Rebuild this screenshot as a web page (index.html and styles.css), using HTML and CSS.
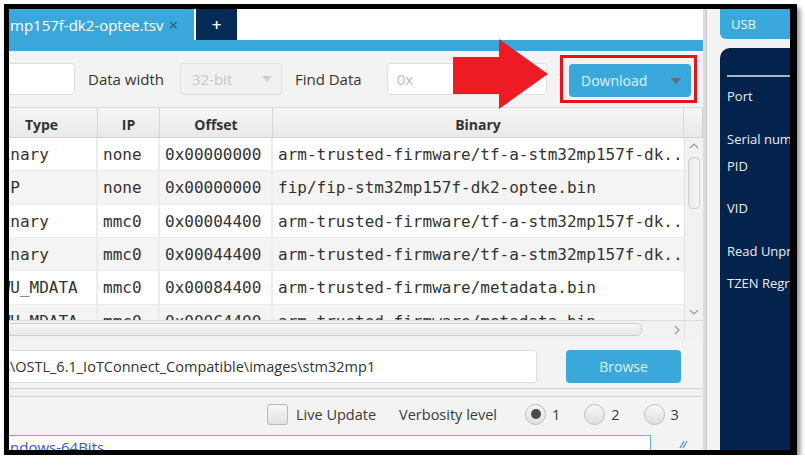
FILE: index.html
```html
<!DOCTYPE html>
<html>
<head>
<meta charset="utf-8">
<link rel="stylesheet" href="styles.css">
</head>
<body>
<div class="frame">
  <div class="main">
    <div class="tabbar">
      <div class="tab active"><span class="tab-title">mp157f-dk2-optee.tsv</span><span class="tab-close">×</span></div>
      <div class="tab add">+</div>
    </div>
    <div class="strip"></div>
    <div class="toolbar">
      <div class="field addr"></div>
      <span class="label lbl-width">Data width</span>
      <div class="combo"><span>32-bit</span><svg class="caret" width="10" height="6" viewBox="0 0 10 6"><path d="M0 0h10L5 6z" fill="#cfcfcf"/></svg></div>
      <span class="label lbl-find">Find Data</span>
      <div class="field find"><span class="ph">0x</span></div>
      <div class="highlight">
        <div class="btn download"><span>Download</span><svg class="caret" width="10" height="6" viewBox="0 0 10 6"><path d="M0 0h10L5 6z" fill="#6a6a6a"/></svg></div>
      </div>
    </div>
    <svg class="arrow" width="96" height="70" viewBox="0 0 96 70"><path d="M0 18H46V0L95 35L46 70V55H0Z" fill="#ED1C24"/></svg>

    <div class="table">
      <div class="thead">
        <div class="th">Type</div>
        <div class="th">IP</div>
        <div class="th">Offset</div>
        <div class="th">Binary</div>
        <div class="th last"></div>
      </div>
      <div class="tbody">
        <div class="rows">
          <div class="tr"><div class="td">Binary</div><div class="td">none</div><div class="td">0x00000000</div><div class="td">arm-trusted-firmware/tf-a-stm32mp157f-dk..</div></div>
          <div class="tr alt"><div class="td">FIP</div><div class="td">none</div><div class="td">0x00000000</div><div class="td">fip/fip-stm32mp157f-dk2-optee.bin</div></div>
          <div class="tr"><div class="td">Binary</div><div class="td">mmc0</div><div class="td">0x00004400</div><div class="td">arm-trusted-firmware/tf-a-stm32mp157f-dk..</div></div>
          <div class="tr alt"><div class="td">Binary</div><div class="td">mmc0</div><div class="td">0x00044400</div><div class="td">arm-trusted-firmware/tf-a-stm32mp157f-dk..</div></div>
          <div class="tr"><div class="td">FWU_MDATA</div><div class="td">mmc0</div><div class="td">0x00084400</div><div class="td">arm-trusted-firmware/metadata.bin</div></div>
          <div class="tr alt"><div class="td">FWU_MDATA</div><div class="td">mmc0</div><div class="td">0x000C4400</div><div class="td">arm-trusted-firmware/metadata.bin</div></div>
        </div>
      </div>
      <div class="vscroll">
        <svg class="chev up" width="10" height="6" viewBox="0 0 10 6"><path d="M1 5L5 1L9 5" fill="none" stroke="#9a9a9a" stroke-width="1.2"/></svg>
        <div class="vthumb"></div>
        <svg class="chev down" width="10" height="6" viewBox="0 0 10 6"><path d="M1 1L5 5L9 1" fill="none" stroke="#9a9a9a" stroke-width="1.2"/></svg>
      </div>
      <div class="hscroll">
        <div class="hthumb"></div>
        <svg class="chev right" width="6" height="10" viewBox="0 0 6 10"><path d="M1 1L5 5L1 9" fill="none" stroke="#9a9a9a" stroke-width="1.2"/></svg>
      </div>
      <div class="corner"></div>
    </div>

    <div class="pathrow">
      <div class="field path">s\OSTL_6.1_IoTConnect_Compatible\images\stm32mp1</div>
      <div class="btn browse">Browse</div>
    </div>
    <div class="splitter"></div>
    <div class="options">
      <div class="checkbox"></div>
      <span class="opt-label live">Live Update</span>
      <span class="opt-label verb">Verbosity level</span>
      <div class="radio on"></div><span class="opt-label num">1</span>
      <div class="radio"></div><span class="opt-label num">2</span>
      <div class="radio"></div><span class="opt-label num">3</span>
    </div>
    <div class="logrow">
      <div class="log"><span class="logtext">ndows-64Bits</span></div>
      <svg class="grip" width="10" height="10" viewBox="0 0 10 10"><path d="M2 9L6 2M5 9L9 2" fill="none" stroke="#3a8fd0" stroke-width="1.2"/></svg>
    </div>
  </div>
  <div class="divider"></div>
  <div class="side">
    <div class="usb">USB</div>
    <div class="panel">
      <div class="panel-line"></div>
      <div class="pl port">Port</div>
      <div class="pl serial">Serial number</div>
      <div class="pl pid">PID</div>
      <div class="pl vid">VID</div>
      <div class="pl read">Read Unprotect</div>
      <div class="pl tzen">TZEN Regression</div>
    </div>
  </div>
</div>
</body>
</html>
```

FILE: styles.css
```css
* { box-sizing: border-box; }
html, body { margin: 0; padding: 0; background: #ffffff; }
body { font-family: "Open Sans", "Noto Sans", sans-serif; color: #333; }

.frame {
  margin: 4px 0 0 4px;
  width: 793px;
  height: 451px;
  border-style: solid;
  border-color: #000;
  border-width: 5px 7px 5px 5px;
  box-shadow: 3px 4px 5px rgba(0,0,0,0.45);
  display: flex;
  overflow: hidden;
  background: #f3f3f3;
}

.main {
  width: 694px;
  flex: none;
  display: flex;
  flex-direction: column;
  background: #f3f3f3;
  position: relative;
  overflow: hidden;
}

/* tabs */
.tabbar { height: 31px; background: #fff; display: flex; flex: none; }
.tab { height: 31px; display: flex; align-items: center; }
.tab.active { width: 185px; background: #3AA8DB; color: #fff; font-size: 15px; padding-left: 1px; }
.tab-close { margin-left: 5px; color: #2b5a7c; font-size: 17px; }
.tab.add { margin-left: 2px; width: 41px; background: #052A55; color: #fff; justify-content: center; font-size: 17px; font-weight: 600; }
.strip { height: 11px; background: #3AA8DB; flex: none; }

/* toolbar */
.toolbar { height: 56px; flex: none; display: flex; align-items: center; }
.field { height: 32px; background: #fff; border: 1px solid #dedede; border-radius: 3px; }
.field.addr { width: 76px; margin-left: -10px; }
.label { font-size: 15px; color: #333; }
.lbl-width { margin-left: 13px; }
.combo {
  margin-left: 16px; width: 102px; height: 32px;
  background: #f1f1f1; border: 1px solid #e3e3e3; border-radius: 3px;
  color: #c6c6c6; font-size: 15px;
  display: flex; align-items: center; justify-content: space-between;
  padding: 0 9px 0 11px;
}
.lbl-find { margin-left: 13px; }
.field.find { margin-left: 25px; width: 160px; display: flex; align-items: center; padding-left: 9px; }
.ph { color: #bcbcbc; font-size: 15px; }
.highlight {
  margin-left: auto; margin-right: 6px;
  border: 3px solid #E8141C;
  padding: 6px 3px 3px 6px;
}
.btn {
  background: #3AA8DB; color: #dff1fa; border-radius: 4px;
  font-size: 14px; height: 33px;
  display: flex; align-items: center;
}
.btn.download { width: 122px; justify-content: space-between; padding: 0 10px 0 12px; }

.arrow { position: absolute; left: 444px; top: 30px; }

/* table */
.table {
  height: 231px; flex: none;
  border-top: 1px solid #d8d8d8;
  display: grid;
  grid-template-columns: 675px 19px;
  grid-template-rows: 30px 182px 18px;
  background: #fff;
}
.thead {
  grid-column: 1 / 3; grid-row: 1;
  display: grid;
  grid-template-columns: 112px 62px 113px 411px 19px;
  margin-left: -23px;
  background: linear-gradient(#f6f6f6, #e9e9e9);
  border-bottom: 1px solid #d2d2d2;
}
.th {
  display: flex; align-items: center; justify-content: center;
  font-weight: 700; font-size: 14px; color: #333;
  padding-top: 4px;
  border-right: 1px solid #d6d6d6;
}
.th.last { border-right: 1px solid #cfcfcf; }
.tbody { grid-column: 1; grid-row: 2; overflow: hidden; background: #fff; }
.rows { margin-left: -23px; }
.tr {
  display: grid;
  grid-template-columns: 112px 62px 113px 411px;
  height: 33.33px;
  background: #fff;
}
.tr.alt { background: #f4f4f4; }
.td {
  font-family: "DejaVu Sans Mono", monospace;
  font-size: 16px; color: #333;
  padding-left: 5px; padding-top: 1px;
  display: flex; align-items: center;
  white-space: nowrap; overflow: hidden;
  border-right: 2px solid #ececec;
  border-bottom: 1px solid #ececec;
}
.td:last-child { border-right: none; }

.vscroll {
  grid-column: 2; grid-row: 2;
  background: #f2f2f2; border-left: 1px solid #e0e0e0;
  display: flex; flex-direction: column; align-items: center;
}
.chev { display: block; flex: none; }
.chev.up { margin-top: 5px; }
.vthumb {
  margin-top: 8px; width: 12px; height: 52px;
  background: linear-gradient(90deg, #e9e9e9, #f6f6f6);
  border: 1px solid #cfcfcf; border-radius: 5px;
}
.chev.down { margin-top: auto; margin-bottom: 5px; }
.hscroll {
  grid-column: 1; grid-row: 3;
  background: #f2f2f2; border-top: 1px solid #dcdcdc;
  display: flex; align-items: center;
}
.hthumb {
  width: 639px; height: 13px; margin-left: -6px;
  background: linear-gradient(#f6f6f6, #e8e8e8);
  border: 1px solid #cfcfcf; border-radius: 5px;
}
.chev.right { margin-left: 32px; }
.corner { grid-column: 2; grid-row: 3; background: #f2f2f2; border-top: 1px solid #dcdcdc; border-left: 1px solid #e0e0e0; }

/* path row */
.pathrow { height: 50px; flex: none; display: flex; align-items: flex-start; padding-top: 12px; }
.field.path {
  margin-left: -10px; width: 538px; height: 33px;
  font-size: 14.5px; color: #333;
  display: flex; align-items: center; padding-left: 3px;
  white-space: nowrap; overflow: hidden;
}
.btn.browse { margin-left: 29px; width: 115px; justify-content: center; }

.splitter { height: 9px; flex: none; background: #f1f1f1; border-top: 1px solid #d3d3d3; border-bottom: 1px solid #d3d3d3; }

/* options */
.options { height: 34px; flex: none; display: flex; align-items: center; padding-left: 258px; }
.checkbox {
  width: 21px; height: 21px; flex: none;
  border: 1px solid #b9b9b9; border-radius: 3px;
  background: linear-gradient(#f7f7f7, #e2e2e2);
}
.opt-label { font-size: 14.5px; color: #3a3a3a; }
.live { margin-left: 8px; }
.verb { margin-left: 23px; }
.radio {
  width: 21px; height: 21px; flex: none; border-radius: 50%;
  border: 1px solid #bdbdbd;
  background: linear-gradient(#f7f7f7, #e0e0e0);
  margin-left: 24px;
  display: flex; align-items: center; justify-content: center;
}
.radio.on::after { content: ""; width: 10px; height: 10px; border-radius: 50%; background: #4a4a4a; }
.radio.on { margin-left: 28px; }
.num { margin-left: 6px; }

/* log */
.logrow { flex: 1; display: flex; align-items: flex-start; margin-top: 4px; }
.log {
  width: 643px; height: 20px; margin-left: -1px;
  background: #fff; border: 1px solid #5db5e2;
  padding: 2px 0 0 1px;
  font-size: 15px; line-height: 18px; color: #3557d8;
}
.grip { margin-left: 27px; margin-top: 4px; }

/* divider + side */
.divider {
  width: 17px; flex: none;
  background: #f3f3f3;
  border-left: 3px solid #dcdcdc;
  box-shadow: inset 1px 0 0 #c9c9c9;
}
.side {
  width: 70px; flex: none;
  display: flex; flex-direction: column;
  background: #f1f1f1;
  overflow: hidden;
}
.usb {
  height: 30px; flex: none;
  background: #3AA8DB; color: #eaf6fc;
  border-bottom-left-radius: 6px;
  font-size: 13px; line-height: 30px; padding-left: 11px;
}
.panel {
  flex: 1; margin-top: 9px;
  background: #04234C; color: #e8edf4;
  border-top-left-radius: 10px;
  padding-left: 7px;
  font-size: 13px; white-space: nowrap; overflow: hidden;
}
.panel-line { height: 2px; background: #a9b3c1; margin-top: 27px; }
.pl { line-height: 18px; }
.port { margin-top: 10px; }
.serial { margin-top: 25px; }
.pid { margin-top: 9px; }
.vid { margin-top: 24px; }
.read { margin-top: 25px; }
.tzen { margin-top: 14px; }
```
